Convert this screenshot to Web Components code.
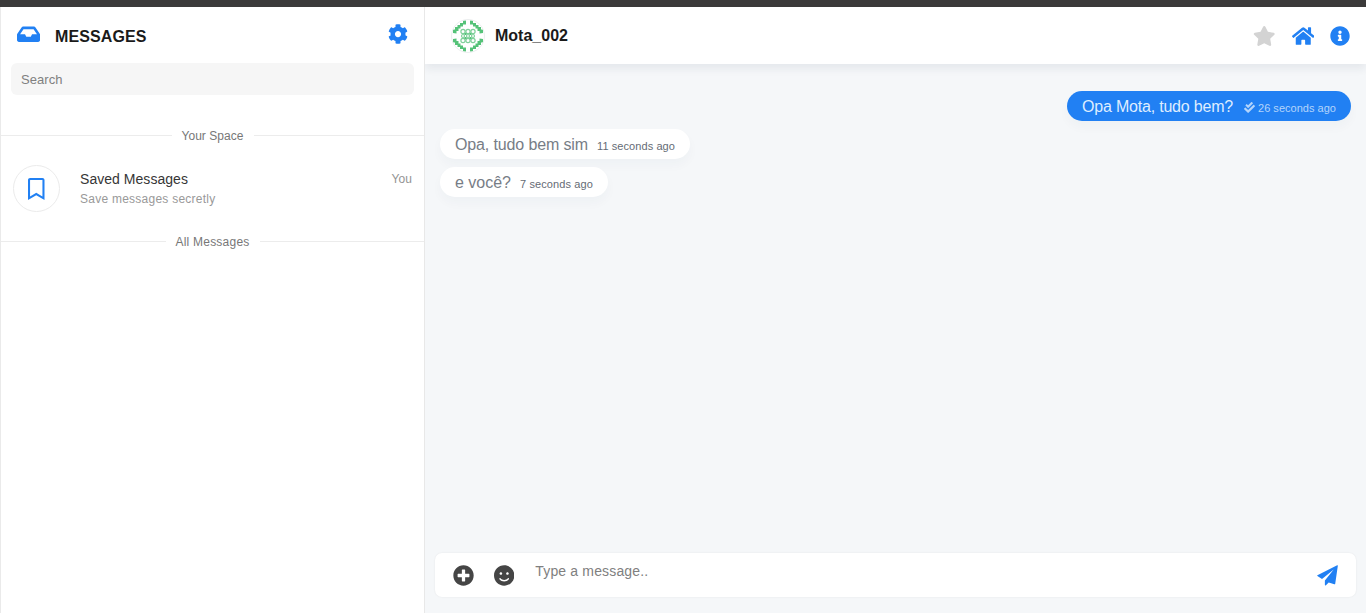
<!DOCTYPE html>
<html lang="en">
<head>
<meta charset="utf-8">
<title>Messages</title>
<style>
html,body{margin:0;height:100%;overflow:hidden}
body{font-family:"Liberation Sans",Arial,sans-serif;background:#fff}
</style>
</head>
<body>
<chat-app></chat-app>
<script>
const define = (name, html, setup) => customElements.define(name, class extends HTMLElement {
  connectedCallback() {
    if (this.shadowRoot) return;
    const root = this.attachShadow({mode: 'open'});
    root.innerHTML = html;
    if (setup) setup(this, root);
  }
});

const ICONS = {
  inbox: [576, 'M567.938 243.908L462.25 85.374A48.003 48.003 0 0 0 422.311 64H153.689a48 48 0 0 0-39.938 21.374L8.062 243.908A47.994 47.994 0 0 0 0 270.533V400c0 26.51 21.49 48 48 48h480c26.51 0 48-21.49 48-48V270.533a47.994 47.994 0 0 0-8.062-26.625zM162.252 128h251.497l85.333 128H376l-32 64H232l-32-64H76.918l85.334-128z'],
  cog: [512, 'M487.4 315.7l-42.6-24.6c4.3-23.2 4.3-47 0-70.2l42.6-24.6c4.9-2.8 7.1-8.6 5.5-14-11.1-35.6-30-67.8-54.7-94.6-3.8-4.1-10-5.1-14.8-2.3L380.8 110c-17.9-15.4-38.5-27.3-60.8-35.1V25.8c0-5.6-3.9-10.5-9.4-11.7-36.7-8.2-74.3-7.8-109.2 0-5.5 1.2-9.4 6.1-9.4 11.7V75c-22.2 7.9-42.8 19.8-60.8 35.1L88.7 85.5c-4.9-2.8-11-1.9-14.8 2.3-24.7 26.7-43.6 58.9-54.7 94.6-1.7 5.4.6 11.2 5.5 14L67.3 221c-4.3 23.2-4.3 47 0 70.2l-42.6 24.6c-4.9 2.8-7.1 8.6-5.5 14 11.1 35.6 30 67.8 54.7 94.6 3.8 4.1 10 5.1 14.8 2.3l42.6-24.6c17.9 15.4 38.5 27.3 60.8 35.1v49.2c0 5.6 3.9 10.5 9.4 11.7 36.7 8.2 74.3 7.8 109.2 0 5.5-1.2 9.4-6.1 9.4-11.7v-49.2c22.2-7.9 42.8-19.8 60.8-35.1l42.6 24.6c4.9 2.8 11 1.9 14.8-2.3 24.7-26.7 43.6-58.9 54.7-94.6 1.5-5.5-.7-11.3-5.6-14.1zM256 336c-44.1 0-80-35.9-80-80s35.9-80 80-80 80 35.9 80 80-35.9 80-80 80z'],
  star: [576, 'M259.3 17.8L194 150.2 47.9 171.5c-26.2 3.8-36.7 36.1-17.7 54.6l105.7 103-25 145.5c-4.5 26.3 23.2 46 46.4 33.7L288 439.6l130.7 68.7c23.2 12.2 50.9-7.4 46.4-33.7l-25-145.5 105.7-103c19-18.5 8.5-50.8-17.7-54.6L382 150.2 316.7 17.8c-11.7-23.6-45.6-23.9-57.4 0z'],
  home: [576, 'M280.37 148.26L96 300.11V464a16 16 0 0 0 16 16l112.06-.29a16 16 0 0 0 15.92-16V368a16 16 0 0 1 16-16h64a16 16 0 0 1 16 16v95.64a16 16 0 0 0 16 16.05L464 480a16 16 0 0 0 16-16V300L295.67 148.26a12.19 12.19 0 0 0-15.3 0zM571.6 251.47L488 182.56V44.05a12 12 0 0 0-12-12h-56a12 12 0 0 0-12 12v72.61L318.47 43a48 48 0 0 0-61 0L4.34 251.47a12 12 0 0 0-1.6 16.9l25.5 31A12 12 0 0 0 45.15 301l235.22-193.74a12.19 12.19 0 0 1 15.3 0L530.9 301a12 12 0 0 0 16.9-1.6l25.5-31a12 12 0 0 0-1.7-16.93z'],
  info: [512, 'M256 8C119.043 8 8 119.083 8 256c0 136.997 111.043 248 248 248s248-111.003 248-248C504 119.083 392.957 8 256 8zm0 110c23.196 0 42 18.804 42 42s-18.804 42-42 42-42-18.804-42-42 18.804-42 42-42zm56 254c0 6.627-5.373 12-12 12h-88c-6.627 0-12-5.373-12-12v-24c0-6.627 5.373-12 12-12h12v-64h-12c-6.627 0-12-5.373-12-12v-24c0-6.627 5.373-12 12-12h64c6.627 0 12 5.373 12 12v100h12c6.627 0 12 5.373 12 12v24z'],
  plus: [512, 'M256 8C119 8 8 119 8 256s111 248 248 248 248-111 248-248S393 8 256 8zm144 276c0 6.600-5.400 12-12 12h-92v92c0 6.600-5.400 12-12 12h-56c-6.600 0-12-5.400-12-12v-92h-92c-6.600 0-12-5.400-12-12v-56c0-6.600 5.400-12 12-12h92v-92c0-6.600 5.400-12 12-12h56c6.600 0 12 5.400 12 12v92h92c6.600 0 12 5.400 12 12v56z'],
  smile: [496, 'M248 8C111 8 0 119 0 256s111 248 248 248 248-111 248-248S385 8 248 8zm80 168c17.700 0 32 14.300 32 32s-14.300 32-32 32-32-14.300-32-32 14.300-32 32-32zm-160 0c17.700 0 32 14.300 32 32s-14.300 32-32 32-32-14.300-32-32 14.300-32 32-32zm194.800 170.200C334.300 380.400 292.500 400 248 400s-86.300-19.600-114.800-53.800c-13.600-16.300 11-36.700 24.600-20.500 22.400 26.900 55.200 42.200 90.200 42.200s67.800-15.400 90.200-42.200c13.400-16.200 38.100 4.200 24.600 20.500z'],
  plane: [512, 'M492 6L10 250c-9 5-9 14 0 20L122 340 408 108 192 376V484c0 14 16 20 27 9L285 424 422 470c12 4 20-1 22-12L508 18c2-12-6-17-16-12z'],
  checks: [512, 'M505 174.800l-39.600-39.600c-9.400-9.400-24.600-9.400-33.900 0L192 374.700 80.600 263.200c-9.400-9.400-24.600-9.400-33.900 0L7 302.900c-9.400 9.400-9.400 24.600 0 34L175 505c9.400 9.400 24.600 9.400 33.900 0l296-296.200c9.400-9.500 9.400-24.700.1-34zm-324.300 106c6.200 6.300 16.400 6.300 22.600 0l208-208.200c6.200-6.300 6.200-16.400 0-22.600L366.100 4.700c-6.200-6.300-16.400-6.300-22.600 0L192 156.200l-55.400-55.500c-6.200-6.300-16.400-6.300-22.600 0L68.700 146c-6.200 6.300-6.200 16.400 0 22.600l112 112.200z'],
  bookmark: [384, 'M336 0H48C21.490 0 0 21.490 0 48v464l192-112 192 112V48c0-26.510-21.490-48-48-48zm0 428.430l-144-84-144 84V54a6 6 0 0 1 6-6h276c3.314 0 6 2.683 6 5.996V428.430z']
};

// Icon: name, and its height in pixels.
define('ui-icon', '<style>:host{display:block;flex:none;color:#2180f3}svg{display:block;fill:currentColor}</style><svg><path/></svg>', (el, root) => {
  const [w, d] = ICONS[el.getAttribute('name')];
  const h = +el.getAttribute('size');
  const svg = root.querySelector('svg');
  svg.setAttribute('viewBox', `0 0 ${w} 512`);
  svg.setAttribute('height', h);
  svg.setAttribute('width', h * w / 512);
  root.querySelector('path').setAttribute('d', d);
});

// One line of text whose tracking is adjusted to fill the given width.
define('fit-text', '<style>:host{display:block;flex:none;white-space:nowrap}span{display:inline-block}</style><span><slot></slot></span>', (el, root) => {
  const span = root.querySelector('span');
  const w = +el.getAttribute('width');
  const gap = (w - span.getBoundingClientRect().width) / el.textContent.length;
  span.style.letterSpacing = gap.toFixed(3) + 'px';
  el.style.width = w + 'px';
});

const CORNER = 'M1 13V9.500h2V7h2.500V5H8V3h3V.500h3V4.500h-3V6.500H8.500V8.500H6.500V11H4.500v2.500z';
define('user-avatar', `<style>
:host{display:block;flex:none;width:32px;height:32px;border-radius:50%;border:1px solid #eceeef;overflow:hidden}
svg{display:block}</style>
<svg width="32" height="32" viewBox="0 0 32 32">
<g fill="#55c278"><path d="${CORNER}"/><path transform="matrix(-1 0 0 1 32 0)" d="${CORNER}"/><path transform="matrix(1 0 0 -1 0 32)" d="${CORNER}"/><path transform="matrix(-1 0 0 -1 32 32)" d="${CORNER}"/></g>
<g fill="none" stroke="#7fd09a" stroke-width="1.200"><circle cx="11" cy="11.500" r="2.100"/><circle cx="16" cy="11.500" r="2.100"/><circle cx="21" cy="11.500" r="2.100"/><circle cx="11" cy="20.500" r="2.100"/><circle cx="16" cy="20.500" r="2.100"/><circle cx="21" cy="20.500" r="2.100"/><circle cx="11" cy="16" r="1.500"/><circle cx="16" cy="16" r="1.500"/><circle cx="21" cy="16" r="1.500"/></g>
<g fill="#55c278"><path d="M12.500 13h2v2h-2zM17.500 13h2v2h-2zM12.500 17h2v2h-2zM17.500 17h2v2h-2z"/></g>
</svg>`);

define('section-title', `<style>
:host{display:flex;align-items:flex-start;gap:10px;height:16px;font-size:12px;line-height:16px;color:#777}
i{flex:1;height:1px;margin-top:7px;background:#ececec}</style><i></i><slot></slot><i></i>`);

define('list-item', `<style>
:host{display:flex;height:47px;padding:0 12px;box-sizing:border-box}
.pic{width:45px;height:45px;border:1px solid #ebebeb;border-radius:50%;display:grid;place-items:center;flex:none}
.body{margin-left:20px;flex:1;padding-top:5px}
.top{display:flex;justify-content:space-between;height:19px;line-height:18px;font-size:14px;color:#363636}
.top ::slotted([slot=time]){font-size:12px;color:#949494}
.sub{font-size:12px;line-height:21px;color:#999}
</style><div class="pic"><slot name="icon"></slot></div><div class="body"><div class="top"><slot name="title"></slot><slot name="time"></slot></div><div class="sub"><slot></slot></div></div>`);

define('side-panel', `<style>
:host{display:flex;flex-direction:column;width:425px;box-sizing:border-box;border-left:1px solid #eaeaea;border-right:1px solid #e8e8e8;background:#fff;position:relative;z-index:1}
header{display:flex;align-items:center;height:56px;padding:0 16px}
header fit-text{margin:3px 0 0 15px;font-size:16px;line-height:17px;font-weight:bold;color:#1a1a1a}
header ui-icon:last-child{margin:-2px 0 0 auto}
header ui-icon:first-child{margin-top:-2px}
.search{margin:0 10px;height:32px;border-radius:6px;background:#f6f6f6;padding-left:10px;display:flex;align-items:center;font-size:13px;color:#808080}
.one{margin-top:33px}.item{margin-top:21px}.two{margin-top:22px}
</style>
<header><ui-icon name="inbox" size="20.500"></ui-icon><fit-text width="91.500">MESSAGES</fit-text><ui-icon name="cog" size="20"></ui-icon></header>
<div class="search"><fit-text width="41.500">Search</fit-text></div>
<section-title class="one"><fit-text width="62">Your Space</fit-text></section-title>
<list-item class="item"><ui-icon slot="icon" name="bookmark" size="22"></ui-icon><fit-text slot="title" width="108">Saved Messages</fit-text><fit-text slot="time" width="20.500">You</fit-text><fit-text width="135.500">Save messages secretly</fit-text></list-item>
<section-title class="two"><fit-text width="74">All Messages</fit-text></section-title>`);

define('message-card', `<style>
:host{display:flex;align-items:center;align-self:flex-start;height:30px;box-sizing:border-box;padding:1px 15px 0;border-radius:20px;background:#fff;box-shadow:0 6px 11px rgba(18,67,105,.03);font-size:16px;color:#777d86}
:host([mine]){align-self:flex-end;background:#2180f3;color:#deedff}
.meta{display:flex;align-items:center;gap:3px;margin:2px 0 0 9px;font-size:11px;color:#656b75}
:host([mine]) .meta{color:#b3d4fb;margin-left:11px}
::slotted(fit-text:not([slot])){padding-top:1px}
</style><slot></slot><div class="meta"><slot name="meta"></slot></div>`);

define('send-form', `<style>
:host{display:flex;height:44px;margin:0 10px 16px;padding:0 18px;border-radius:7px;background:#fff;box-shadow:0 0 2px rgba(0,0,0,.08);color:#808080;font-size:14px}
ui-icon{margin-top:12px}ui-icon.dark{color:#454545}.smile{margin-left:20px}
fit-text{margin:10px 0 0 21px;line-height:17px}.send{margin-left:auto}
</style><ui-icon class="dark" name="plus" size="21"></ui-icon><ui-icon class="dark smile" name="smile" size="21"></ui-icon><fit-text width="113">Type a message..</fit-text><ui-icon class="send" name="plane" size="21"></ui-icon>`);

define('chat-view', `<style>
:host{display:flex;flex-direction:column;flex:1;background:#f5f7f9}
header{display:flex;align-items:center;height:57px;padding:0 16px 0 26px;background:#fff;box-shadow:0 5px 8px rgba(30,45,65,.07)}
header fit-text{margin-left:10px;font-size:16px;font-weight:bold;color:#1a1a1a}
nav{display:flex;align-items:center;margin:1px 0 0 auto}
.star{color:#d3d3d3}.home{margin-left:16px}.info{margin-left:16px}
.list{flex:1;display:flex;flex-direction:column;gap:8px;padding:27px 15px}
.tick{color:#b3d4fb}
</style>
<header><user-avatar></user-avatar><fit-text width="73">Mota_002</fit-text><nav><ui-icon class="star" name="star" size="20"></ui-icon><ui-icon class="home" name="home" size="20"></ui-icon><ui-icon class="info" name="info" size="20"></ui-icon></nav></header>
<div class="list">
<message-card mine><fit-text width="151">Opa Mota, tudo bem?</fit-text><ui-icon class="tick" slot="meta" name="checks" size="11"></ui-icon><fit-text slot="meta" width="78">26 seconds ago</fit-text></message-card>
<message-card><fit-text width="133">Opa, tudo bem sim</fit-text><fit-text slot="meta" width="78">11 seconds ago</fit-text></message-card>
<message-card><fit-text width="56">e você?</fit-text><fit-text slot="meta" width="73">7 seconds ago</fit-text></message-card>
</div>
<send-form></send-form>`);

define('chat-app', `<style>
:host{display:flex;flex-direction:column;height:613px}
.bar{height:7px;background:#3b3a3a;flex:none}
main{display:flex;flex:1}
</style><div class="bar"></div><main><side-panel></side-panel><chat-view></chat-view></main>`);
</script>
</body>
</html>
